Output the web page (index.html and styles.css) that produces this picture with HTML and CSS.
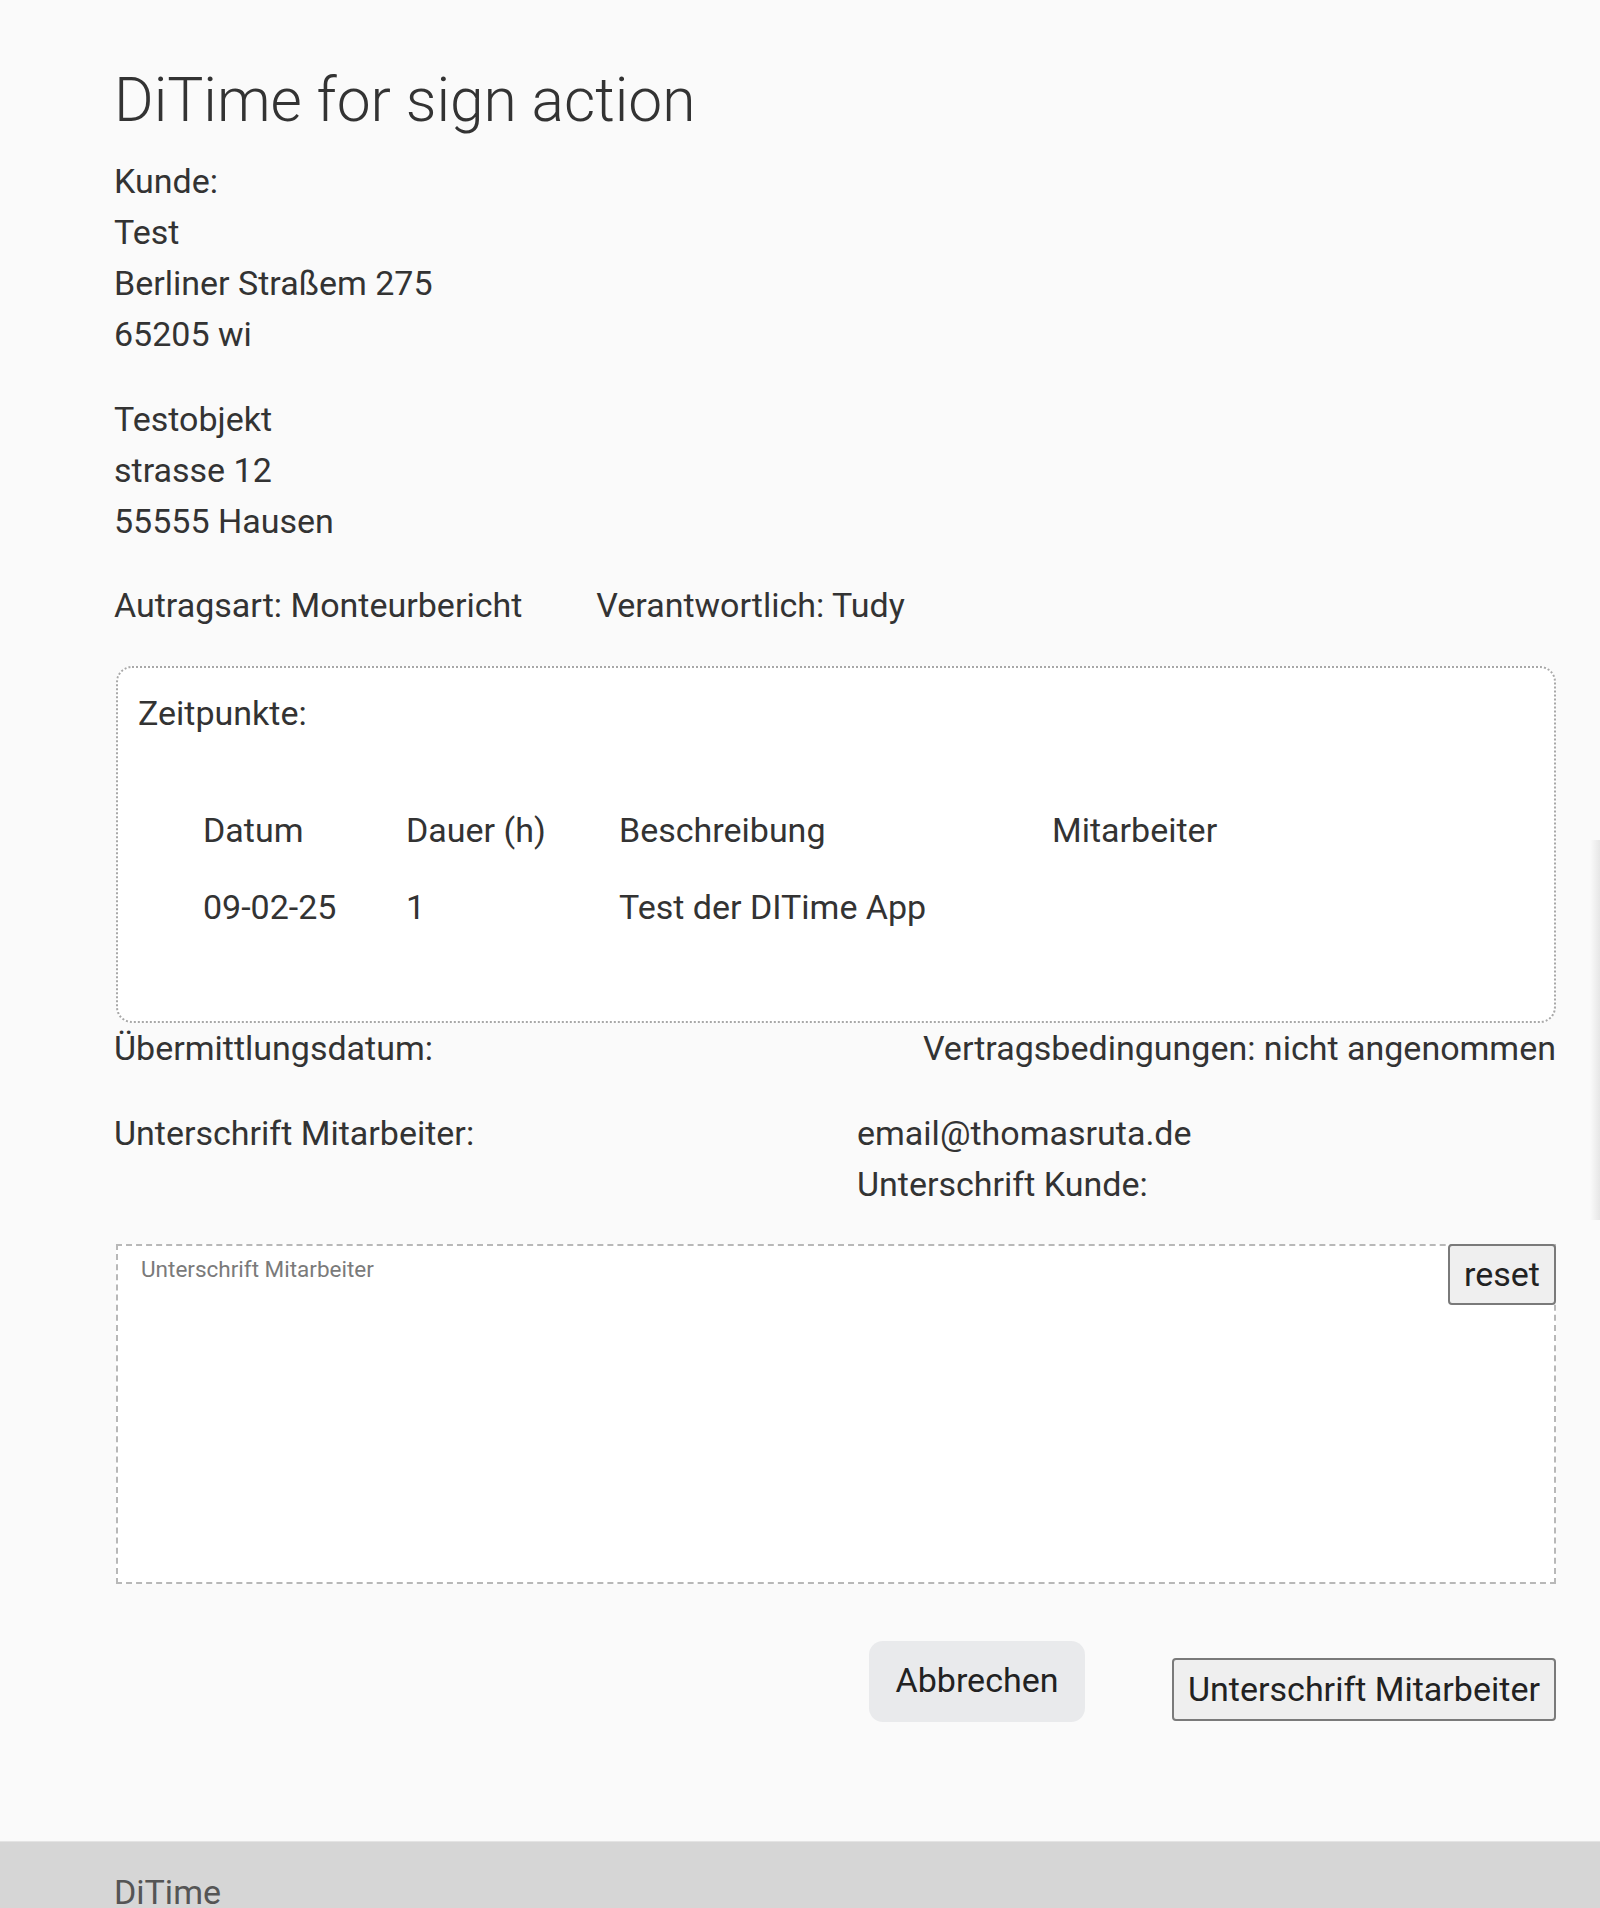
FILE: index.html
```html
<!DOCTYPE html>
<html lang="de">
<head>
<meta charset="utf-8">
<title>DiTime for sign action</title>
<link rel="stylesheet" href="styles.css">
</head>
<body>
<main class="page">
  <h1 class="title">DiTime for sign action</h1>
  <p class="block">Kunde:<br>Test<br>Berliner Straßem 275<br>65205 wi</p>
  <p class="block">Testobjekt<br>strasse 12<br>55555 Hausen</p>
  <div class="meta">
    <span>Autragsart: Monteurbericht</span>
    <span>Verantwortlich: Tudy</span>
  </div>
  <section class="times">
    <div class="times-label">Zeitpunkte:</div>
    <table class="times-table">
      <thead>
        <tr><th class="c-date">Datum</th><th class="c-dur">Dauer (h)</th><th class="c-desc">Beschreibung</th><th>Mitarbeiter</th></tr>
      </thead>
      <tbody>
        <tr><td>09-02-25</td><td>1</td><td>Test der DITime App</td><td></td></tr>
      </tbody>
    </table>
  </section>
  <div class="status">
    <span>Übermittlungsdatum:</span>
    <span>Vertragsbedingungen: nicht angenommen</span>
  </div>
  <div class="signers">
    <div>Unterschrift Mitarbeiter:</div>
    <div>email@thomasruta.de<br>Unterschrift Kunde:</div>
  </div>
  <div class="pad">
    <div class="pad-label">Unterschrift Mitarbeiter</div>
    <button class="btn-plain reset">reset</button>
  </div>
  <div class="actions">
    <button class="btn-soft">Abbrechen</button>
    <button class="btn-plain sign">Unterschrift Mitarbeiter</button>
  </div>
</main>
<footer class="footer">DiTime</footer>
<div class="edge-shadow"></div>
</body>
</html>
```
FILE: styles.css
```css
html, body {
  margin: 0;
  padding: 0;
}
body {
  background: #fafafa;
  color: #333;
  font-family: Roboto, "Noto Sans", "Liberation Sans", sans-serif;
  font-size: 34px;
  line-height: 51.2px;
  position: relative;
}
.page {
  padding: 63px 0 0 114px;
  width: 1442px;
}
.title {
  margin: 0 0 16px;
  font-size: 60.5px;
  font-weight: 300;
  line-height: 76.8px;
  color: #333;
}
.block {
  margin: 0 0 33px;
}
.meta {
  display: flex;
  gap: 74px;
  margin-bottom: 35px;
}
.times {
  margin-left: 2px;
  border: 2px dotted #a8a8a8;
  border-radius: 16px;
  background: #fff;
  padding: 20px 20px 75px;
}
.times-table {
  border-collapse: collapse;
  margin: 52px 0 0 65px;
}
.times-table th,
.times-table td {
  text-align: left;
  font-weight: 400;
  padding: 13px 0;
  vertical-align: middle;
}
.c-date { width: 203px; }
.c-dur { width: 213px; }
.c-desc { width: 433px; }
.status {
  display: flex;
  justify-content: space-between;
}
.signers {
  display: grid;
  grid-template-columns: 743px 1fr;
  margin-top: 34px;
}
.pad {
  position: relative;
  margin: 33px 0 0 2px;
  height: 336px;
  border: 2px dashed #b8b8b8;
  background: #fff;
}
.pad-label {
  padding: 10px 0 0 23px;
  font-size: 22.5px;
  line-height: 26px;
  color: #7a7a7a;
}
.btn-plain {
  font-family: Roboto, "Noto Sans", "Liberation Sans", sans-serif;
  font-size: 34px;
  color: #222;
  background: #efefef;
  border: 2px solid #7a7a7a;
  border-radius: 4px;
  padding: 0;
  height: 61px;
}
.reset {
  position: absolute;
  top: -2px;
  right: -2px;
  width: 108px;
}
.actions {
  display: flex;
  justify-content: flex-end;
  align-items: flex-end;
  gap: 87px;
  margin-top: 57px;
}
.btn-soft {
  font-family: Roboto, "Noto Sans", "Liberation Sans", sans-serif;
  font-size: 34px;
  color: #222;
  background: #e9eaec;
  border: none;
  border-radius: 14px;
  width: 216px;
  height: 81px;
  padding: 0 0 2px;
}
.sign {
  width: 384px;
  height: 63px;
  margin-bottom: 1px;
}
.footer {
  margin-top: 119px;
  background: #d6d6d6;
  height: 69px;
  box-sizing: border-box;
  padding: 25px 0 0 114px;
  color: #555;
  border-top: 1px solid #e4e4e4;
}
.edge-shadow {
  position: absolute;
  right: 0;
  top: 840px;
  width: 10px;
  height: 380px;
  background: linear-gradient(to right, rgba(0,0,0,0), rgba(0,0,0,0.08));
}
```
